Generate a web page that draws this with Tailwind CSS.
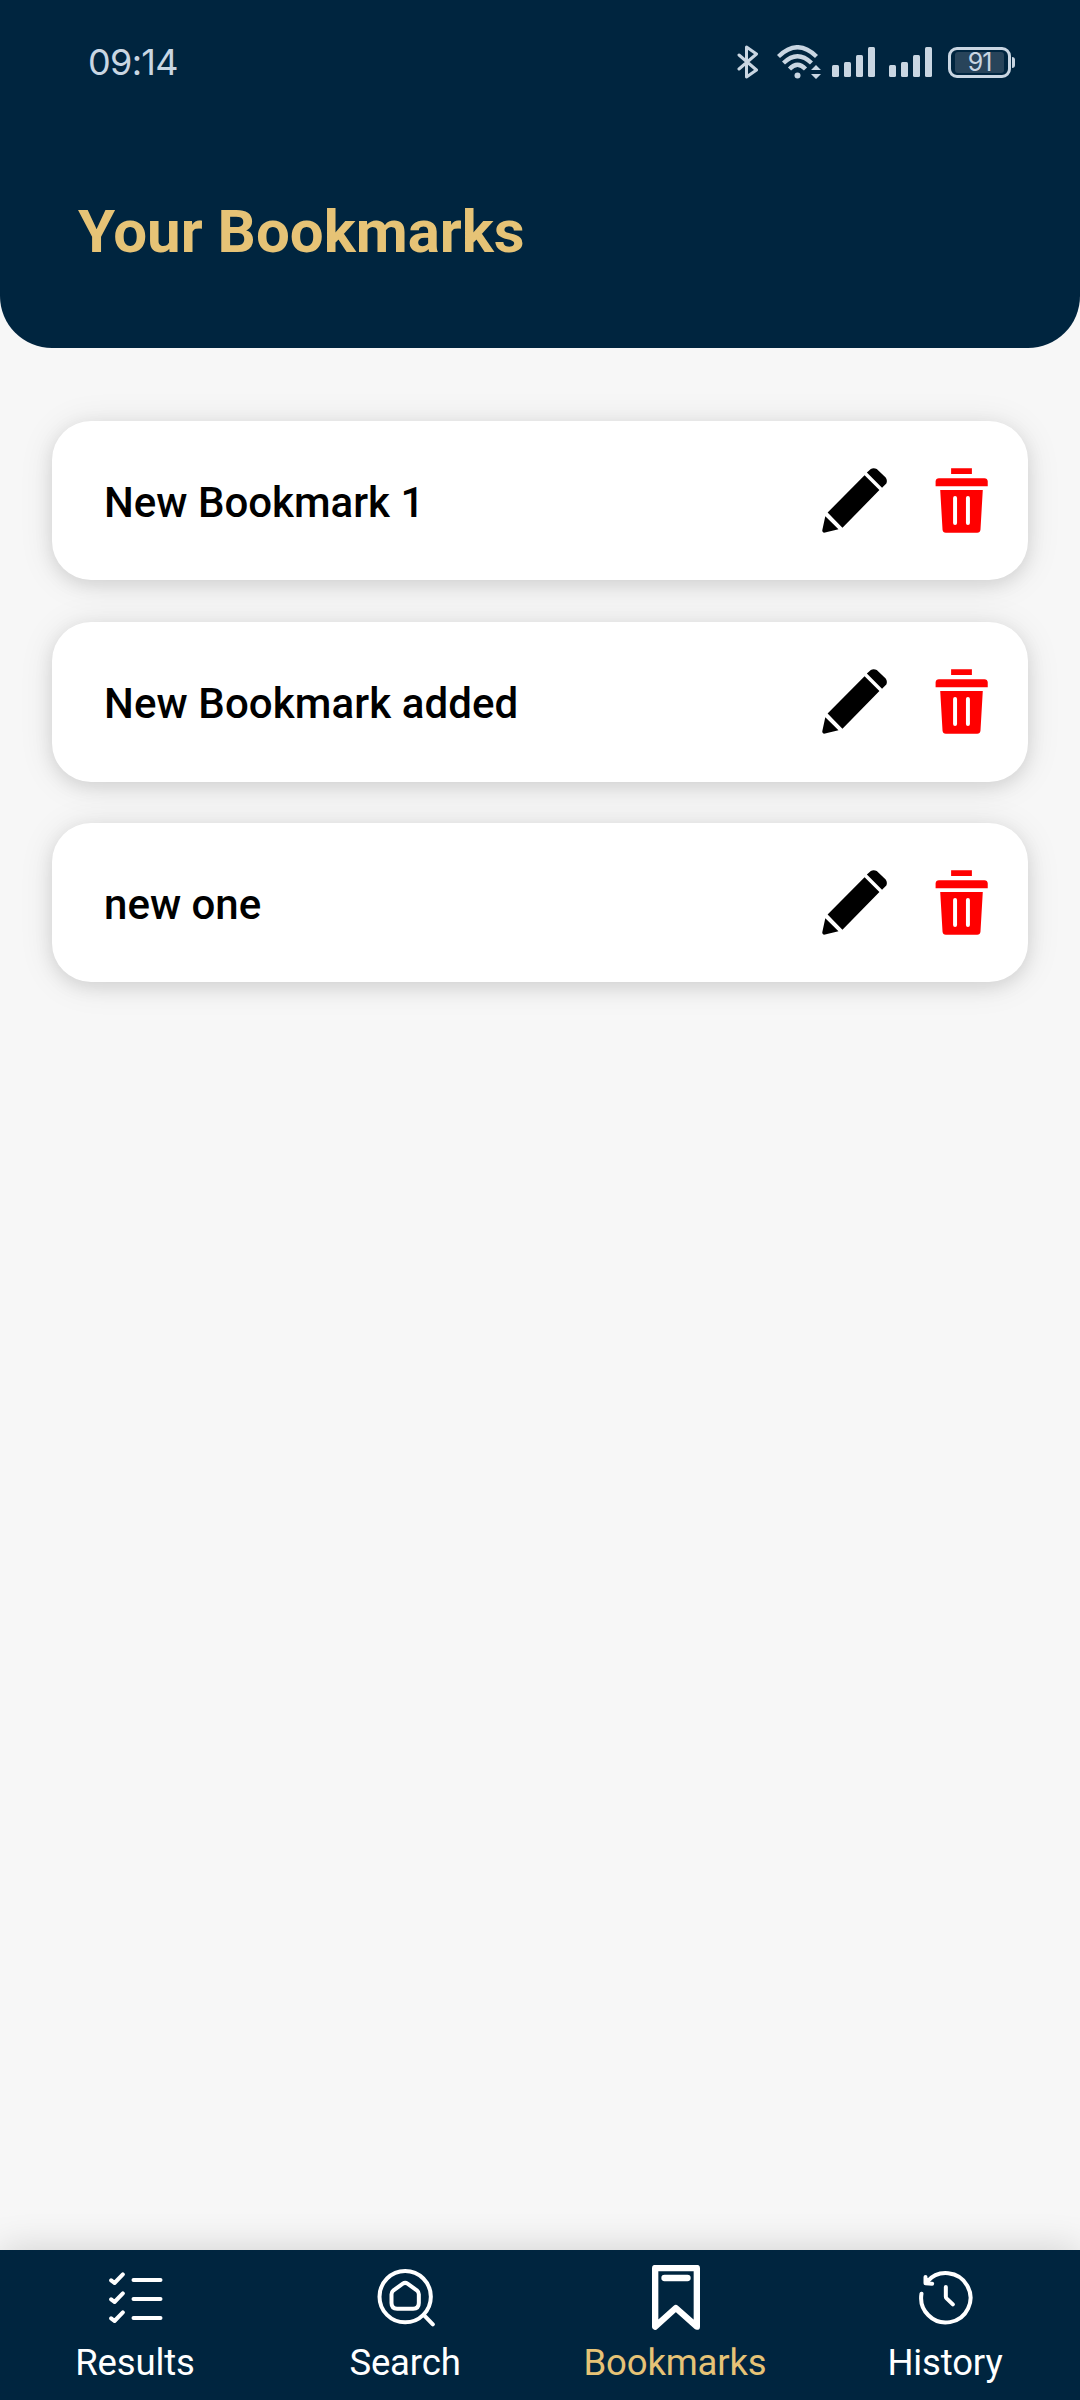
<!DOCTYPE html>
<html lang="en">
<head>
<meta charset="utf-8">
<title>Your Bookmarks</title>
<script src="https://cdn.jsdelivr.net/npm/@tailwindcss/browser@4"></script>
</head>
<body class="bg-[#f7f7f7]">
<svg class="hidden">
  <symbol id="pencil" viewBox="125 203 197 197">
    <path d="M261 217L273 206Q281 201 291 206L318 232Q324 240 320 250L307 263ZM254 225L299 270L187 384L142 338ZM135 349L175 389L131 399Q125 398 126 391Z"/>
  </symbol>
  <symbol id="trash" viewBox="465 203 159 197">
    <path d="M513 204H576V221H513ZM466 258V243Q467 234 476 234H614Q623 234 624 243V258ZM480 270H609L602 390Q601 399 592 399H497Q488 399 487 390Z"/>
    <path d="M525 294V370M564 294V370" stroke="#fff" stroke-width="12" stroke-linecap="round"/>
  </symbol>
  <symbol id="signal" viewBox="0 0 43 30">
    <rect y="18" width="7" height="12" rx="1.5"/><rect x="12" y="15" width="7" height="15" rx="1.5"/><rect x="24" y="8" width="7" height="22" rx="1.5"/><rect x="36" width="7" height="30" rx="1.5"/>
  </symbol>
</svg>
<div class="flex h-[2400px] w-[1080px] flex-col overflow-hidden font-['Roboto',sans-serif]">
  <header class="h-[348px] shrink-0 rounded-b-[52px] bg-[#00253f]">
    <div class="flex h-[124px] items-center justify-between pr-[65px] pl-[88px] text-[#c9d6e2]">
      <span class="font-['Inter',sans-serif] text-[36px] leading-none tracking-[-0.7px]">09:14</span>
      <div class="flex items-center">
        <svg class="h-[34px] w-[22px]" viewBox="0 0 22 34" fill="none" stroke="currentColor" stroke-width="3" stroke-linejoin="round" stroke-linecap="round"><path d="M2 10L19.500 25L9.500 32V2L19.500 9L2 24"/></svg>
        <svg class="ml-[18px] h-[34px] w-[45px]" viewBox="0 0 45 34" fill="none" stroke="currentColor" stroke-width="4.300"><path d="M1.500 11.500Q20.500 -7 39.500 11.500M6.500 18Q20.500 4.500 34.500 18M12.500 24Q20.500 15.500 28.500 24"/><circle cx="20.500" cy="30.500" r="3" fill="currentColor" stroke="none"/><path d="M34 25L39 20L44 25ZM34 29L39 34L44 29Z" fill="currentColor" stroke="none"/></svg>
        <svg class="ml-[10px] h-[30px] w-[43px]" fill="currentColor"><use href="#signal"/></svg>
        <svg class="ml-[14px] h-[30px] w-[43px]" fill="currentColor"><use href="#signal"/></svg>
        <div class="ml-[16px] flex h-[31px] w-[63px] items-center justify-center rounded-[9px] border-[3px] border-current">
          <div class="flex h-[21px] w-[49px] items-center justify-center rounded-[3px] bg-[#28445a] pt-px font-['Inter',sans-serif] text-[25px] leading-none tracking-[-1px]">91</div>
        </div>
        <div class="ml-px h-[11px] w-[3px] rounded-r-sm bg-current"></div>
      </div>
    </div>
    <h1 class="pt-[72px] pl-[78px] text-[60px] leading-[72px] font-bold text-[#e6c376]">Your Bookmarks</h1>
  </header>

  <main class="flex grow flex-col gap-[42px] px-[52px] pt-[73px]">
    <div class="flex h-[159px] items-center rounded-[39px] bg-white pr-[40px] pl-[52px] shadow-[0_5px_18px_rgba(0,0,0,0.1),0_3px_36px_rgba(0,0,0,0.09)]">
      <span class="grow pt-1 text-[42px] font-medium text-black">New Bookmark 1</span>
      <svg class="size-[65px]"><use href="#pencil"/></svg>
      <svg class="ml-[48px] h-[65px] w-[53px]" fill="#ff0000"><use href="#trash"/></svg>
    </div>
    <div class="-mb-px flex h-[160px] items-center rounded-[39px] bg-white pr-[40px] pb-px pl-[52px] shadow-[0_5px_18px_rgba(0,0,0,0.1),0_3px_36px_rgba(0,0,0,0.09)]">
      <span class="grow pt-1 text-[42px] font-medium tracking-[0.1px] text-black">New Bookmark added</span>
      <svg class="size-[65px]"><use href="#pencil"/></svg>
      <svg class="ml-[48px] h-[65px] w-[53px]" fill="#ff0000"><use href="#trash"/></svg>
    </div>
    <div class="flex h-[159px] items-center rounded-[39px] bg-white pr-[40px] pl-[52px] shadow-[0_5px_18px_rgba(0,0,0,0.1),0_3px_36px_rgba(0,0,0,0.09)]">
      <span class="grow pt-1 text-[42px] font-medium text-black">new one</span>
      <svg class="size-[65px]"><use href="#pencil"/></svg>
      <svg class="ml-[48px] h-[65px] w-[53px]" fill="#ff0000"><use href="#trash"/></svg>
    </div>
  </main>

  <nav class="grid h-[150px] shrink-0 grid-cols-4 bg-[#00253f] pt-[15px] text-[36.500px] leading-[44px] tracking-[-0.15px] text-white shadow-[0_0_36px_rgba(0,0,0,0.16)]">
    <a class="flex flex-col items-center gap-[11px]">
      <svg class="size-[65px]" viewBox="127.500 105 195 195" fill="none" stroke="currentColor" stroke-width="12" stroke-linecap="round" stroke-linejoin="round"><path d="M219 150H300M219 207H300M219 264H300"/><path d="M152 151L162 159L187 133M152 208L162 216L187 190M152 265L162 273L187 247"/></svg>
      <span>Results</span>
    </a>
    <a class="flex flex-col items-center gap-[11px]">
      <svg class="size-[65px]" viewBox="937.500 105 195 195" fill="none" stroke="currentColor" stroke-width="12" stroke-linecap="round" stroke-linejoin="round"><circle cx="1034" cy="200" r="77"/><path d="M1091 256L1117 283M1027 161Q1034 156 1041 161L1069 181Q1075 186 1075 193V219Q1075 236 1058 236H1010Q993 236 993 219V193Q993 186 999 181Z"/></svg>
      <span>Search</span>
    </a>
    <a class="flex flex-col items-center gap-[11px]">
      <svg class="size-[65px]" viewBox="247.500 105 195 195" fill="none" stroke="currentColor" stroke-width="19" stroke-linecap="round" stroke-linejoin="round"><path d="M284 114H409V290L346 234L284 290ZM312 144H381"/></svg>
      <span class="text-[#e6c376]">Bookmarks</span>
    </a>
    <a class="flex flex-col items-center gap-[11px]">
      <svg class="size-[65px]" viewBox="1057.500 105 195 195" fill="none" stroke="currentColor" stroke-width="12" stroke-linecap="round" stroke-linejoin="round"><path d="M1083 191A74 74 0 1 0 1100 155M1095 141V160L1115 161M1156 171V200Q1156 203 1159 206L1177 223"/></svg>
      <span>History</span>
    </a>
  </nav>
</div>
</body>
</html>
